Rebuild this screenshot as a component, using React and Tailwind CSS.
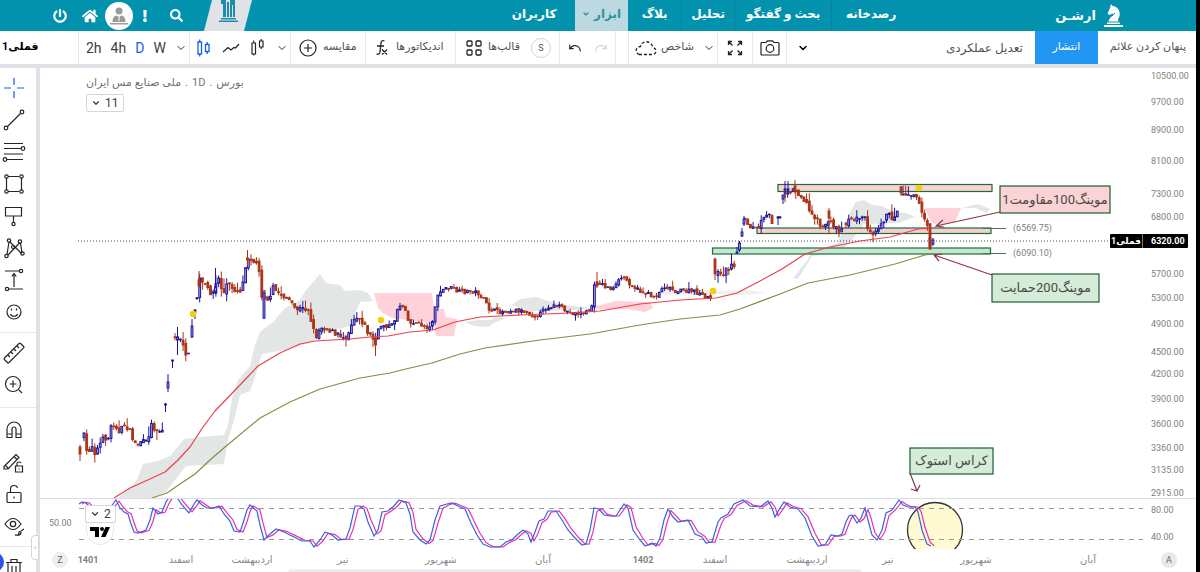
import React, { useState } from "react";
import { FaPowerOff, FaHome, FaExclamation, FaSearch } from "react-icons/fa";
import { ChevronDown, Undo, Redo } from "lucide-react";

const navLinks = [
  { label: "کاربران", box: "w-[82px]" },
  { label: "ابزار", box: "w-[53px]", active: true },
  { label: "بلاگ", box: "w-[54px] border-r border-black/10" },
  { label: "تحلیل", box: "w-[53px] border-r border-black/10" },
  { label: "بحث و گفتگو", box: "w-[97px] border-r border-black/10" },
  { label: "رصدخانه", box: "w-[78px]" },
];

const priceLabels = [
  ["10500.00", 76], ["9700.00", 102], ["8900.00", 130], ["8100.00", 161], ["7300.00", 194],
  ["6800.00", 217], ["5700.00", 274], ["5300.00", 298], ["4900.00", 324], ["4500.00", 352],
  ["4200.00", 374], ["3900.00", 399], ["3600.00", 424], ["3360.00", 448], ["3135.00", 470],
  ["2915.00", 493], ["80.00", 510], ["40.00", 537],
];

const monthLabels = [
  ["اسفند", 181], ["اردیبهشت", 252], ["تیر", 343], ["شهریور", 441], ["آبان", 543],
  ["اسفند", 715], ["اردیبهشت", 807], ["تیر", 888], ["شهریور", 976], ["آبان", 1088],
];

const yearLabels = [["1401", 88], ["1402", 643]];

// closing prices, one list for each unbroken run of days
const runs = [
  [[84, 436], [86, 452], [90, 449], [93, 444], [95, 453], [98, 448], [101, 442], [105, 437], [108, 440], [110, 428], [113, 424], [117, 426], [120, 437], [122, 428], [125, 424], [129, 430], [132, 436], [134, 443], [138, 444], [141, 441], [145, 443], [148, 442], [150, 423], [153, 427], [158, 430], [162, 432], [164, 421]],
  [[175, 338], [178, 337], [181, 342], [184, 350], [188, 355], [190, 359]],
  [[197, 297], [199, 279], [201, 281], [205, 286], [209, 291], [213, 293], [215, 287], [218, 277], [221, 287], [224, 293], [227, 284], [230, 286], [234, 289], [238, 291], [242, 289], [245, 268], [247, 258], [250, 256], [252, 260], [256, 264], [259, 267], [260, 289], [262, 296]],
  [[265, 296], [267, 298], [270, 302], [272, 286], [275, 290], [280, 294], [284, 296], [289, 300], [293, 307], [298, 309], [303, 309], [308, 308], [310, 314], [312, 326], [315, 334], [317, 336], [320, 327], [324, 327], [328, 329], [332, 331], [334, 336], [340, 335], [345, 338], [349, 331], [351, 324], [354, 318], [357, 317], [361, 319], [364, 324], [367, 331], [371, 336], [375, 342], [378, 333], [380, 326], [383, 325], [388, 326], [393, 325], [396, 315], [398, 306], [402, 305], [406, 309], [409, 325], [413, 322], [418, 324], [424, 326], [430, 328], [433, 318], [436, 301], [440, 292], [446, 288], [452, 288], [458, 292], [464, 292], [472, 291], [478, 293], [484, 300], [489, 309], [496, 311], [500, 312], [508, 311], [516, 310], [524, 311], [530, 314], [534, 316], [540, 314], [546, 308], [552, 306], [558, 306], [564, 310], [571, 313], [580, 313], [588, 312], [592, 305], [595, 282], [600, 283], [606, 287], [614, 289], [618, 282], [623, 276], [626, 280], [632, 285], [638, 290], [645, 293], [655, 297], [660, 291], [665, 286], [670, 288], [676, 291], [684, 291], [692, 291], [700, 294], [704, 298], [713, 296]],
  [[718, 274], [720, 277], [724, 272], [729, 268], [734, 264], [736, 262]],
  [[745, 220], [749, 225], [754, 228], [757, 230], [760, 224], [765, 218], [770, 215], [773, 225]],
  [[785, 191], [789, 191], [794, 190], [798, 192], [801, 196], [806, 202], [810, 213], [815, 216], [820, 224], [823, 230], [826, 223], [829, 219], [832, 226], [836, 227], [840, 231], [844, 228]],
  [[846, 222], [850, 217], [856, 220], [860, 216], [865, 219], [868, 228], [873, 232], [878, 227], [883, 220], [888, 215], [893, 218], [896, 213], [898, 211]],
  [[903, 193], [908, 193], [913, 194], [917, 194], [919, 205], [921, 211], [924, 219], [926, 220], [928, 232], [930, 247], [931, 247]],
];

// [x, open, close, high, low] of the days that stand alone
const loneCandles = [
  [80, 447, 454, 445, 461], [165.5, 405, 404, 403, 412], [168, 388, 382, 374, 392],
  [172.5, 361, 360, 360, 368], [177.5, 340, 337, 327, 355], [192, 337, 326, 319, 338],
  [195, 312, 310, 309, 319], [247.5, 258, 260, 250, 266], [264, 318, 293, 290, 319],
  [215.5, 292, 287, 268, 294], [199, 280, 286, 271, 288], [375.5, 338, 345, 338, 356],
  [597, 282, 286, 272, 288], [715, 259, 274, 258, 280], [737, 253, 252, 247, 254],
  [739.5, 250, 243, 241, 252], [742, 236, 232, 228, 237], [744, 224, 219, 216, 226],
  [778, 218, 217, 216, 225], [780, 218, 217, 216, 218], [783, 199, 195, 195, 204],
  [785, 190, 189, 181, 198], [788, 190, 189, 181, 193], [795, 186, 190, 180, 194],
  [829, 211, 218, 208, 233], [901, 187, 193, 186, 196], [930, 238, 247, 234, 248],
  [933, 244, 240, 238, 246],
];

function buildCandles() {
  const out = [];
  let seed = 7;
  const rand = () => {
    seed = (seed * 16807) % 2147483647;
    return seed / 2147483647;
  };
  for (const run of runs) {
    let prev = run[0][1];
    let i = 0;
    for (let x = run[0][0]; x <= run[run.length - 1][0]; x += 2.7) {
      while (i < run.length - 2 && run[i + 1][0] < x) i++;
      const [x0, y0] = run[i];
      const [x1, y1] = run[i + 1];
      // calmer trading in the long sideways stretch
      const swing = x > 380 && x < 714 ? 4 : 6;
      const y = y0 + ((y1 - y0) * (x - x0)) / (x1 - x0) + (rand() - 0.5) * swing;
      const open = prev + (rand() - 0.5) * swing * 0.6;
      out.push([
        x,
        open,
        y,
        Math.min(open, y) - rand() * rand() * swing * 1.8,
        Math.max(open, y) + rand() * rand() * swing * 1.6,
      ]);
      prev = y;
    }
  }
  return out.concat(loneCandles);
}

const candles = buildCandles();

const stoch = [
  [79, 504], [82, 502], [86, 503], [89, 506], [100, 512], [110, 508], [116, 500], [120, 508], [124, 512], [128, 514], [131, 524], [134, 532], [138, 533], [146, 530], [150, 520], [153, 508], [158, 514], [162, 512], [166, 502], [170, 496], [176, 496], [182, 505], [189, 513], [194, 504], [197, 500], [202, 505], [207, 508], [213, 508], [219, 506], [224, 514], [230, 521], [234, 531], [240, 532], [244, 520], [247, 510], [250, 505], [257, 511], [260, 525], [264, 540], [270, 534], [276, 529], [284, 532], [292, 536], [302, 541], [310, 541], [314, 547], [320, 540], [325, 532], [332, 535], [338, 540], [346, 539], [350, 528], [355, 506], [360, 506], [364, 509], [368, 522], [374, 536], [378, 530], [382, 512], [388, 511], [394, 506], [399, 500], [406, 503], [410, 514], [413, 532], [420, 540], [426, 544], [430, 540], [435, 520], [440, 506], [447, 504], [452, 503], [458, 506], [465, 509], [471, 523], [477, 535], [483, 544], [490, 547], [500, 547], [506, 542], [512, 540], [517, 535], [523, 530], [528, 534], [531, 542], [535, 532], [539, 521], [544, 519], [548, 511], [556, 511], [562, 520], [568, 530], [575, 538], [582, 545], [586, 544], [590, 530], [594, 508], [599, 509], [604, 515], [610, 516], [616, 516], [620, 510], [624, 504], [628, 508], [633, 530], [640, 540], [645, 546], [652, 543], [656, 546], [660, 538], [664, 520], [668, 509], [673, 517], [678, 522], [688, 520], [695, 534], [702, 537], [706, 543], [712, 542], [718, 522], [721, 518], [728, 514], [734, 504], [743, 500], [750, 506], [760, 507], [768, 501], [772, 508], [775, 517], [780, 508], [784, 502], [790, 507], [798, 509], [805, 518], [812, 536], [818, 546], [825, 545], [831, 535], [838, 536], [842, 534], [846, 522], [849, 516], [852, 515], [857, 523], [861, 518], [865, 508], [868, 520], [872, 535], [877, 540], [882, 530], [886, 513], [892, 510], [899, 500], [903, 505], [908, 507], [915, 507], [918, 512], [922, 530], [927, 544], [931, 546],
];

const fastLine = stoch.map((p) => p.join(",")).join(" ");
// the slow line is the fast one averaged and a few days late
const slowLine = stoch
  .map(([x, y], i) => [x + 3, i ? y * 0.85 + stoch[i - 1][1] * 0.15 : y].join(","))
  .join(" ");

const tools = [
  { name: "Cross", color: "text-blue-600", icon: <path d="M14 4v7M14 17v7M4 14h7M17 14h7" /> },
  { name: "Trend line", icon: <><path d="M7.500 20.500l13-13" /><circle cx="6" cy="22" r="1.800" /><circle cx="22" cy="6" r="1.800" /></> },
  { name: "Fib retracement", icon: <><path d="M4 5.500h19M4 10.500h17M4 16h19M7 21.500h16" /><circle cx="23" cy="10.500" r="1.800" /><circle cx="5" cy="21.500" r="1.800" /></> },
  { name: "Shapes", icon: <><path d="M8 6.500h11M8 21.500h11M6.500 8v12M21.500 8v12" /><circle cx="6.500" cy="6.500" r="1.700" /><circle cx="21.500" cy="6.500" r="1.700" /><circle cx="6.500" cy="21.500" r="1.700" /><circle cx="21.500" cy="21.500" r="1.700" /></> },
  { name: "Text note", icon: <><path d="M5.500 5.500h16v8.500h-16zM13.500 14v6.500" /><circle cx="13.500" cy="22" r="1.600" /></> },
  { name: "Patterns", icon: <><path d="M7 20.500L9 8M8 21l12-12.500M10 8l11.500 11.500M20.500 9l1.500 10" /><circle cx="9" cy="6.500" r="1.700" /><circle cx="20" cy="7.500" r="1.700" /><circle cx="6.500" cy="22" r="1.700" /><circle cx="22.500" cy="19.500" r="1.700" /><circle cx="13" cy="13" r="1.500" /></> },
  { name: "Prediction", icon: <><path d="M5 5h14M8 23h15M14 21V8M11.800 10.500L14 7.500l2.200 3" /><circle cx="21" cy="5" r="1.700" /><circle cx="7" cy="23" r="1.700" /></> },
  { name: "Emoji", icon: <><circle cx="14" cy="14" r="7" /><path d="M10.500 16c1 3 6 3 7 0M11.500 10.500v2M16.500 10.500v2" /></> },
];

const measureTools = [
  { name: "Ruler", icon: <path d="M4.500 19L19 4.500q.8-.8 1.600 0l3 3q.7.700 0 1.400L9 23.500q-.8.800-1.600 0l-3-3q-.700-.7 0-1.500zM8 16l2 2M11 13l2 2M14 10l2 2M17 7l2 2" /> },
  { name: "Zoom in", icon: <><circle cx="13" cy="13" r="7.500" /><path d="M13 9.500v7M9.500 13h7M19 19l3 3" /></> },
];

const lockTools = [
  { name: "Magnet", icon: <path d="M7 21.500V13a7 7 0 0 1 14 0v8.500h-5V13a2 2 0 0 0-4 0v8.500zM7 18h5M16 18h5" /> },
  { name: "Drawing mode", icon: <><path d="M4 18.500L16 6.500l3 3L8 21H4zM14 8.500l3 3M5 17l3 3" /><path d="M15.500 18h7v6h-7zM17 18v-2.500q0-1.500 2-1.500 1.500 0 2 1M19 20.500v1" /></> },
  { name: "Lock", icon: <><rect x="7" y="12.500" width="14" height="10" rx="1" /><path d="M10.500 12.500V9q0-3.500 3.500-3.500 3 0 3.500 2.500M14 16.500v2" /></> },
  { name: "Hide drawings", icon: <><path d="M5 12q8-11 16 0-8 11-16 0z" /><circle cx="13" cy="12" r="2.700" /><path d="M15 23q4 1 4-3 2-1 2 1-1 3-6 2zM21 19l3-2" /></> },
];

function ToolButton({ tool }) {
  return (
    <button aria-label={tool.name} className={`flex h-8 w-7 shrink-0 items-center justify-center ${tool.color || "text-neutral-800"}`}>
      <svg className="h-7 w-7" viewBox="0 0 28 28" fill="none" stroke="currentColor" strokeWidth="1.200">
        {tool.icon}
      </svg>
    </button>
  );
}

function Sidebar() {
  return (
    <aside className="flex w-10 shrink-0 flex-col overflow-hidden border-r-4 border-[#e0e1e6] bg-white pt-1">
      {tools.map((t) => <ToolButton key={t.name} tool={t} />)}
      <hr className="my-1 border-gray-200" />
      {measureTools.map((t) => <ToolButton key={t.name} tool={t} />)}
      <hr className="my-1.5 border-gray-200" />
      {lockTools.map((t) => <ToolButton key={t.name} tool={t} />)}
      <hr className="my-1 border-gray-200" />
      <ToolButton tool={{ name: "Remove", icon: <path d="M6 9.500h16M11 9V6.500h6V9M8 9.500V24h12V9.500M12 13v8M16 13v8" /> }} />
    </aside>
  );
}

function Header() {
  return (
    <header className="flex h-[31px] shrink-0 items-center bg-[#0392ae] text-white">
      <div className="flex flex-1 items-center pl-[53px]">
        <button aria-label="Log out" className="w-[29px]"><FaPowerOff className="h-[14px] w-[14px]" /></button>
        <a href="#home" aria-label="Home" className="w-[23px]"><FaHome className="h-4 w-4" /></a>
        <a href="#profile" aria-label="Profile" className="flex h-7 w-7 items-center justify-center rounded-full bg-white">
          <svg className="h-5 w-5" viewBox="0 0 20 20" fill="#9a9a9a">
            <circle cx="10" cy="5" r="3.500" />
            <path d="M3.500 16q0-6 4-6.500l2.500 1.500 2.500-1.500q4 .5 4 6.500z" />
            <path d="M1 17h18v1.500H1z" />
            <path d="M9.500 11h1v4h-1z" fill="#fff" />
          </svg>
        </a>
        <button aria-label="Alerts" className="flex w-6 justify-center"><FaExclamation className="h-3 w-3" /></button>
        <button aria-label="Search" className="ml-[13px] w-[34px]"><FaSearch className="h-[13px] w-[13px]" /></button>
        <svg className="h-[31px] w-12" viewBox="0 0 48 31">
          <path d="M8 0h40l-8 31H0z" fill="#e0e3e5" />
          <path d="M15 20.500h19V22H15zM17 18h15v1.500H17zM19 0h3v17h-3zM23 2h2v15h-2zM26 0h2v17h-2zM29 3h2v14h-2zM17 0h3v4h-3zM27 0h4v5h-4z" fill="#1d8ca8" />
        </svg>
      </div>

      {/* Main menu, first item on the left */}
      <nav className="mr-[145px] flex h-full text-xs font-bold">
        {navLinks.map((link) => (
          <a
            key={link.label}
            href="#menu"
            dir="rtl"
            className={`flex items-center justify-center gap-1 pb-1 whitespace-nowrap ${link.box} ${link.active ? "bg-[#bcd8e0] text-[#2f93a0]" : ""}`}
          >
            {link.label}
            {link.active && <ChevronDown className="h-2 w-2" strokeWidth={4} />}
          </a>
        ))}
      </nav>

      <a href="#home" className="mr-[73px] flex items-center gap-2">
        <span className="text-[13px] font-bold">ارشـن</span>
        <svg className="h-6 w-[19px]" viewBox="0 0 19 24" fill="currentColor">
          <path d="M0 21h19v2H0zM3 18.500h13V20H3z" />
          <path d="M7 0l1.500 2Q14 2.500 15.500 8q1 4-1.500 7l.5 2.500H4.500Q5 14 9.500 11l-1-1.500-3 1.500L3.500 9.500 6 4z" />
          <path d="M11 9q-1.500 2-5 3.500" fill="none" stroke="#0392ae" />
        </svg>
      </a>
    </header>
  );
}

function Toolbar() {
  const [interval, setInterval] = useState("D");
  const cell = "flex h-full items-center border-r border-gray-200";

  return (
    <div className="flex h-[37px] shrink-0 items-center border-b-4 border-[#e0e1e6] bg-white text-xs whitespace-nowrap text-neutral-600">
      <button dir="rtl" className="flex h-full w-[78px] items-center justify-end pl-0.5 text-[11px] font-bold text-black">
        فملی1
      </button>
      <div className={`${cell} w-28 gap-[9px] border-l pl-[7px] text-sm`}>
        {["2h", "4h", "D", "W"].map((v) => (
          <button key={v} onClick={() => setInterval(v)} className={v === interval ? "text-blue-600" : "text-neutral-700"}>
            {v}
          </button>
        ))}
        <button aria-label="Intervals"><ChevronDown className="h-3 w-3 text-neutral-800" /></button>
      </div>
      <div className={`${cell} w-[101px] gap-2.5 pl-1.5`}>
        <button aria-label="Candles" className="text-blue-600">
          <svg className="h-5 w-4" viewBox="0 0 16 20" fill="none" stroke="currentColor" strokeWidth="1.300">
            <path d="M2 4h3.500v12H2zM3.700 1.500V4M3.700 16v2.500M9.500 6.500h3.500v7H9.500zM11.200 4v2.500M11.200 13.500V16" />
          </svg>
        </button>
        <button aria-label="Line">
          <svg className="h-4 w-[18px]" viewBox="0 0 18 16" fill="none" stroke="#222" strokeWidth="1.200">
            <path d="M1 12l5-4.500 3 2.500 3-2.500 1.500.5L17 4" />
          </svg>
        </button>
        <button aria-label="Hollow candles">
          <svg className="h-5 w-4" viewBox="0 0 16 20" fill="none" stroke="#222" strokeWidth="1.200">
            <path d="M2 5h3.500v11H2zM3.700 2.500V5M3.700 16v1.500M9.500 3h3.500v6H9.500zM11.200 1v2M11.200 9v2" />
          </svg>
        </button>
        <button aria-label="Chart types"><ChevronDown className="h-3 w-3 text-neutral-800" /></button>
      </div>
      <button className={`${cell} w-[75px] gap-1.5 pl-2`}>
        <svg className="h-[18px] w-[18px]" viewBox="0 0 18 18" fill="none" stroke="#222" strokeWidth="1.200">
          <circle cx="9" cy="9" r="8" /><path d="M9 5v8M5 9h8" />
        </svg>
        <span className="text-[11px]">مقایسه</span>
      </button>
      <button className={`${cell} w-[90px] gap-1.5 pl-2`}>
        <svg className="h-5 w-4" viewBox="0 0 16 20" fill="none" stroke="#222" strokeWidth="1.300">
          <path d="M10.500 3q-3-1.500-3.500 2L6 14q-.5 3-3.500 2M3 8h7M8 11.500l5 5M13 11.500l-5 5" />
        </svg>
        <span className="text-[11px]">اندیکاتورها</span>
      </button>
      <div className={`${cell} w-[104px] pl-2.5`}>
        <button className="flex items-center gap-1.5">
          <svg className="h-4 w-4" viewBox="0 0 16 16" fill="none" stroke="#222" strokeWidth="1.300">
            <rect x="1" y="1" width="5" height="5" rx="1" /><rect x="10" y="1" width="5" height="5" rx="1" />
            <rect x="1" y="10" width="5" height="5" rx="1" /><rect x="10" y="10" width="5" height="5" rx="1" />
          </svg>
          <span className="text-[11px]">قالب‌ها</span>
        </button>
        <button className="ml-auto mr-2 flex h-5 w-5 items-center justify-center rounded-full border border-gray-300 text-[9px]">S</button>
      </div>
      <div className={`${cell} w-14 gap-3 pl-2`}>
        <button aria-label="Undo"><Undo className="h-[14px] w-[14px] text-neutral-800" /></button>
        <button aria-label="Redo"><Redo className="h-[14px] w-[14px] text-neutral-300" /></button>
      </div>
      <div className={`${cell} w-[13px]`} />
      <button className={`${cell} w-[89px] gap-1 pl-1.5`}>
        <svg className="h-4 w-[22px]" viewBox="0 0 22 16" fill="none" stroke="#222" strokeWidth="1.300" strokeDasharray="3 2">
          <path d="M4 14.500h14c4-1 4-6 0-7C16 0 7 0 5.500 6.500 0 7 0 13 4 14.500z" />
        </svg>
        <span className="text-[11px]">شاخص</span>
        <ChevronDown className="ml-auto mr-0.5 h-3 w-3 text-neutral-800" />
      </button>
      <button aria-label="Full screen" className={`${cell} w-[35px] justify-center`}>
        <svg className="h-4 w-4" viewBox="0 0 16 16" fill="none" stroke="#222" strokeWidth="1.300">
          <path d="M1.500 5V1.500H5M1.500 1.500l4 4M11 1.500h3.500V5M14.500 1.500l-4 4M1.500 11v3.500H5M1.500 14.500l4-4M11 14.500h3.500V11M14.500 14.500l-4-4" />
        </svg>
      </button>
      <button aria-label="Snapshot" className={`${cell} w-[34px] justify-center`}>
        <svg className="h-4 w-5" viewBox="0 0 20 16" fill="none" stroke="#222" strokeWidth="1.200">
          <path d="M1 3.500q0-1 1-1h4L7.500.800h5L14 2.500h4q1 0 1 1V14q0 1-1 1H2q-1 0-1-1z" /><circle cx="10" cy="8.500" r="3.800" />
        </svg>
      </button>
      <button aria-label="More" className="ml-2.5 text-black"><ChevronDown className="h-3 w-3" strokeWidth={3} /></button>
      <button className="ml-auto mr-3 text-xs">تعدیل عملکردی</button>
      <button className="h-full w-[63px] bg-[#2196f3] text-[11px] text-white">انتشار</button>
      <button className="mr-2.5 ml-3 text-[11px]">پنهان کردن علائم</button>
    </div>
  );
}

function Note({ x, y, width, height, pink, children }) {
  return (
    <g>
      <rect x={x} y={y} width={width} height={height} fill={pink ? "#fbd3d4" : "#d5ecd8"} stroke="#1f5c34" strokeWidth="1.200" />
      <text x={x + width / 2} y={y + height / 2 + 4} direction="rtl" textAnchor="middle" fontSize="13" fill="#4a4a4a">
        {children}
      </text>
    </g>
  );
}

function Chart() {
  return (
    <svg className="h-full w-full" viewBox="40 68 1156 504" preserveAspectRatio="xMinYMin meet">
      <defs>
        <clipPath id="oscillator"><rect x="78" y="499" width="1066" height="50" /></clipPath>
      </defs>

      {/* Cloud */}
      <g fill="#e2e7e6">
        <polygon points="118,498 130,488 137,480 143,464 158,461 170,456 184,439 200,437 224,435 228,425 232,398 238,380 250,366 255,345 260,332 273,322 285,308 300,300 306,290 320,274 326,283 340,285 345,291 360,290 368,293 373,301 360,302 354,316 350,326 325,332 310,343 285,350 262,354 254,380 250,391 240,395 234,420 228,440 224,464 186,466 175,480 166,492 152,498" />
        <polygon points="512,305 520,299 536,297 548,301 560,304 580,307 596,308 575,310 545,311 530,311 520,308" />
        <polygon points="465,322 478,320 490,320 498,317 506,318 494,323 488,327 474,326" />
        <polygon points="660,289 690,288 716,291 745,290 768,293 740,295 710,294 665,295" opacity="0.6" />
        <polygon points="793,278 806,262 812,252 838,243 848,216 856,202 864,200 872,205 882,206 894,212 906,213 915,217 898,223 864,224 852,240 840,252 812,256 798,279" />
        <polygon points="962,208 978,204 990,209 986,213 976,208" />
      </g>
      <g fill="#ffd1d8">
        <polygon points="374,293 432,293 434,308 444,309 446,317 457,319 454,336 436,336 434,326 424,322 392,318 383,313 378,308" />
        <polygon points="592,307 616,301 650,302 653,308 645,312 627,309 594,309" />
        <polygon points="925,208 961,208 955,222 939,226 931,222" />
      </g>

      {/* Support and resistance zones */}
      <g stroke="#1f6b3a" strokeWidth="1.200">
        <rect x="778" y="184.500" width="214" height="7" fill="#fbd3d4" />
        <rect x="757" y="228" width="234" height="5.500" fill="#f5cfd0" />
        <rect x="712.500" y="248" width="278" height="6" fill="#c5e6d0" />
      </g>
      <path d="M983 228.500h23M983 253.500h23" stroke="#4a6f5c" />
      <path d="M78 241h1032" stroke="#444" strokeDasharray="1 2" />

      {/* Candles */}
      {candles.map(([x, open, close, high, low], i) => {
        const up = close <= open;
        const tone = up ? "#1b169c" : "#ab3417";
        return (
          <g key={i} stroke={tone} strokeWidth="1">
            <path d={`M${x} ${high}V${low}`} />
            <rect
              x={x - 0.9}
              y={Math.min(open, close)}
              width="1.800"
              height={Math.max(0.5, Math.abs(open - close))}
              fill={up ? "#aaa6ec" : tone}
            />
          </g>
        );
      })}

      {/* Moving averages */}
      <g fill="none" strokeWidth="1.200" strokeLinejoin="round">
        <path stroke="#ee3f4c" d="M114 498L130 488 150 479 165 472 178 460 190 447 203 427 215 411 240 385 258 366 280 353 300 344 315 341 350 339 370 337 388 336 410 332 433 330 455 322 480 317 520 315 570 313 600 311 640 304 680 300 716 298 737 293 760 281 782 269 805 254 830 247 860 241 890 237 918 229 932 228" />
        <path stroke="#8c8b42" d="M152 498L167 493 180 484 195 474 210 460 225 447 260 418 290 402 320 389 360 378 390 373 410 368 432 363 460 354 485 348 540 340 590 334 640 325 680 319 720 315 740 309 780 294 808 283 850 275 895 264 925 255 932 254" />
      </g>
      <g fill="#f2cf0c">
        <circle cx="193" cy="314" r="3.300" />
        <circle cx="381" cy="320" r="3.300" />
        <circle cx="713" cy="291" r="3.300" />
        <circle cx="919" cy="188" r="3.300" />
      </g>

      {/* Notes and their arrows */}
      <path d="M1000 212L936 226M943 220l-7 6 8 1M992 275l-58-20M942 254l-8 1 5 6M910 473l7 18M911 489l6 2 3-6" fill="none" stroke="#8d3547" strokeWidth="1.200" />
      <Note x={1000} y={186} width={110} height={27} pink>موینگ100مقاومت1</Note>
      <Note x={992} y={274} width={107} height={28}>موینگ200حمایت</Note>
      <Note x={910} y={448} width={83} height={26}>کراس استوک</Note>

      {/* Oscillator pane */}
      <path d="M40 498.500h1156" stroke="#dadde8" />
      <g clipPath="url(#oscillator)" fill="none">
        <circle cx="935" cy="530" r="27.500" fill="#fffad2" stroke="#333" strokeWidth="1.300" />
        <path d="M79 508.500h1064M79 539.500h1064" stroke="#999" strokeDasharray="5 5" />
        <polyline points={slowLine} stroke="#e830b4" strokeWidth="1.200" />
        <polyline points={fastLine} stroke="#3b62dc" strokeWidth="1.200" />
      </g>

      {/* Axes */}
      <g fontSize="9" fill="#808080">
        {priceLabels.map(([label, y]) => (
          <text key={label} x="1151" y={y + 3}>{label}</text>
        ))}
        <text x="1013" y="231">(6569.75)</text>
        <text x="1013" y="256">(6090.10)</text>
        <text x="49" y="526">50.00</text>
        {yearLabels.map(([label, x]) => (
          <text key={label} x={x} y="563" textAnchor="middle" fontWeight="700">{label}</text>
        ))}
      </g>
      <g fontSize="10" fill="#8a8a8a" textAnchor="middle">
        {monthLabels.map(([label, x]) => (
          <text key={x} x={x} y="563">{label}</text>
        ))}
      </g>
      <rect x="1110" y="234" width="78" height="14" rx="1" fill="#000" />
      <path d="M1142.500 234v14" stroke="#777" />
      <g fill="#fff" fontSize="9" fontWeight="700">
        <text x="1126" y="244" direction="rtl" textAnchor="middle">فملی1</text>
        <text x="1151" y="244">6320.00</text>
      </g>
      <circle cx="60" cy="560" r="8" fill="#eeeff2" />
      <circle cx="1169" cy="560" r="8" fill="#e8e9ef" />
      <g fontSize="9" fill="#666" textAnchor="middle">
        <text x="60" y="563">Z</text>
        <text x="1169" y="563">A</text>
      </g>
      <path d="M290 571h570" stroke="#ececf0" strokeWidth="3" strokeLinecap="round" />
    </svg>
  );
}

function App() {
  return (
    <div className="flex h-screen flex-col overflow-hidden border-r-4 border-black bg-white font-['Roboto','DejaVu_Sans',sans-serif]">
      <Header />
      <Toolbar />
      <div className="relative flex min-h-0 flex-1">
        <Sidebar />
        <main className="relative min-w-0 flex-1">
          <Chart />
          <div className="absolute top-1.5 left-[46px] flex flex-col items-start gap-0.5">
            <h1 className="flex gap-1 text-[11px] leading-[18px] text-neutral-500">
              <span>ملی صنایع مس ایران</span>
              <span>.</span>
              <span>1D</span>
              <span>.</span>
              <span>بورس</span>
            </h1>
            <button className="flex h-[18px] items-center gap-1 rounded-xs border border-gray-300 bg-white px-1 text-xs text-neutral-700">
              <ChevronDown className="h-[10px] w-[10px]" strokeWidth={3} />11
            </button>
          </div>
          <div className="absolute bottom-[27px] left-[45px] flex flex-col items-center">
            <button className="z-10 flex h-[18px] items-center gap-1 rounded-xs border border-gray-300 bg-white px-1 text-xs text-neutral-700">
              <ChevronDown className="h-[10px] w-[10px]" strokeWidth={3} />2
            </button>
            <a href="#tradingview" aria-label="TradingView" className="-mt-1 flex h-[26px] w-7 items-center justify-center rounded-b-full border border-gray-200 bg-white">
              <svg className="h-[10px] w-5" viewBox="0 0 20 10">
                <path d="M0 0h9v10H5V4H0zM15.500 0H20l-4.500 10H11z" />
                <circle cx="12" cy="2" r="2" />
              </svg>
            </a>
          </div>
        </main>
        {/* Panel handle and chat bubble */}
        <button aria-label="Collapse" className="absolute bottom-3 left-[31px] h-[25px] w-2 rounded-l border border-gray-300 bg-white text-[8px] leading-none text-gray-400">‹</button>
        <button aria-label="Chat" className="absolute bottom-0 -left-4 h-5 w-5 rounded-full bg-[#2f55e8]" />
      </div>
    </div>
  );
}

export default App;
